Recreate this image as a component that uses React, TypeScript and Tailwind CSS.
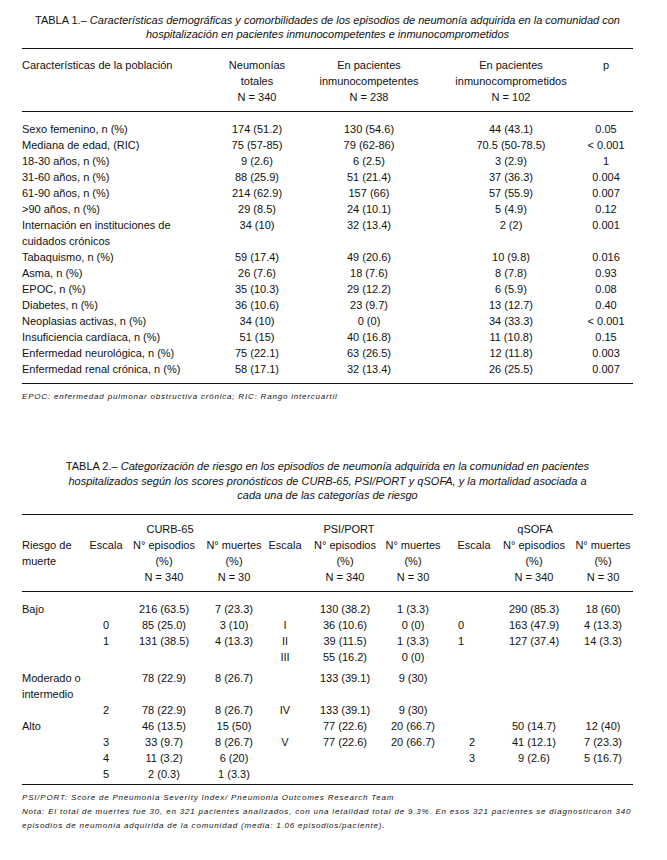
import React from "react";

type Row = string[];

const t1Header: Row[] = [
  ["Características de la población", "Neumonías", "En pacientes", "En pacientes", "p"],
  ["", "totales", "inmunocompetentes", "inmunocomprometidos", ""],
  ["", "N = 340", "N = 238", "N = 102", ""],
];

const t1Rows: Row[] = [
  ["Sexo femenino, n (%)", "174 (51.2)", "130 (54.6)", "44 (43.1)", "0.05"],
  ["Mediana de edad, (RIC)", "75 (57-85)", "79 (62-86)", "70.5 (50-78.5)", "< 0.001"],
  ["18-30 años, n (%)", "9 (2.6)", "6 (2.5)", "3 (2.9)", "1"],
  ["31-60 años, n (%)", "88 (25.9)", "51 (21.4)", "37 (36.3)", "0.004"],
  ["61-90 años, n (%)", "214 (62.9)", "157 (66)", "57 (55.9)", "0.007"],
  [">90 años, n (%)", "29 (8.5)", "24 (10.1)", "5 (4.9)", "0.12"],
  ["Internación en instituciones de", "34 (10)", "32 (13.4)", "2 (2)", "0.001"],
  ["cuidados crónicos", "", "", "", ""],
  ["Tabaquismo, n (%)", "59 (17.4)", "49 (20.6)", "10 (9.8)", "0.016"],
  ["Asma, n (%)", "26 (7.6)", "18 (7.6)", "8 (7.8)", "0.93"],
  ["EPOC, n (%)", "35 (10.3)", "29 (12.2)", "6 (5.9)", "0.08"],
  ["Diabetes, n (%)", "36 (10.6)", "23 (9.7)", "13 (12.7)", "0.40"],
  ["Neoplasias activas, n (%)", "34 (10)", "0 (0)", "34 (33.3)", "< 0.001"],
  ["Insuficiencia cardíaca, n (%)", "51 (15)", "40 (16.8)", "11 (10.8)", "0.15"],
  ["Enfermedad neurológica, n (%)", "75 (22.1)", "63 (26.5)", "12 (11.8)", "0.003"],
  ["Enfermedad renal crónica, n (%)", "58 (17.1)", "32 (13.4)", "26 (25.5)", "0.007"],
];

// riesgo, esc, epi, muertes (CURB-65) | esc, epi, muertes (PSI) | esc, epi, muertes (qSOFA)
const t2Rows: Row[] = [
  ["Bajo", "", "216 (63.5)", "7 (23.3)", "", "130 (38.2)", "1 (3.3)", "", "290 (85.3)", "18 (60)"],
  ["", "0", "85 (25.0)", "3 (10)", "I", "36 (10.6)", "0 (0)", "0", "163 (47.9)", "4 (13.3)"],
  ["", "1", "131 (38.5)", "4 (13.3)", "II", "39 (11.5)", "1 (3.3)", "1", "127 (37.4)", "14 (3.3)"],
  ["", "", "", "", "III", "55 (16.2)", "0 (0)", "", "", ""],
  ["Moderado o", "", "78 (22.9)", "8 (26.7)", "", "133 (39.1)", "9 (30)", "", "", ""],
  ["intermedio", "", "", "", "", "", "", "", "", ""],
  ["", "2", "78 (22.9)", "8 (26.7)", "IV", "133 (39.1)", "9 (30)", "", "", ""],
  ["Alto", "", "46 (13.5)", "15 (50)", "", "77 (22.6)", "20 (66.7)", "", "50 (14.7)", "12 (40)"],
  ["", "3", "33 (9.7)", "8 (26.7)", "V", "77 (22.6)", "20 (66.7)", "2", "41 (12.1)", "7 (23.3)"],
  ["", "4", "11 (3.2)", "6 (20)", "", "", "", "3", "9 (2.6)", "5 (16.7)"],
  ["", "5", "2 (0.3)", "1 (3.3)", "", "", "", "", "", ""],
];

const t1Cols = "grid grid-cols-[178px_114px_110px_174px_16px]";
const t2Cols = "grid grid-cols-[62px_44px_72px_68px_34px_86px_50px_72px_48px_90px]";

function Rule() {
  return <div className="h-px w-[611px] bg-[#111]" />;
}

function T1Row({ row }: { row: Row }) {
  return (
    <div className={t1Cols}>
      <div className="whitespace-nowrap">{row[0]}</div>
      {row.slice(1).map((c, i) => (
        <div key={i} className="flex justify-center whitespace-nowrap">
          {c}
        </div>
      ))}
    </div>
  );
}

function T2Row({ row, className = "" }: { row: Row; className?: string }) {
  return (
    <div className={`${t2Cols} ${className}`}>
      <div className="whitespace-nowrap">{row[0]}</div>
      {row.slice(1).map((c, i) => {
        let extra = "";
        // qSOFA escala: 0 y 1 quedan más a la izquierda
        if (i === 6) extra = c === "0" || c === "1" ? "pr-[26px]" : "pr-[4px]";
        return (
          <div key={i} className={`flex justify-center whitespace-nowrap ${extra}`}>
            {c}
          </div>
        );
      })}
    </div>
  );
}

export default function App() {
  return (
    <div className="min-h-screen w-[667px] bg-white px-[22px] text-[11px] leading-4 text-[#111] font-['Liberation_Sans',Arial,Helvetica,sans-serif]">
      {/* TABLA 1 */}
      <div className="w-[611px] pt-[13px] text-center text-[11px] leading-[14px] whitespace-nowrap">
        TABLA 1.– <i>Características demográficas y comorbilidades de los episodios de neumonía adquirida en la comunidad con</i>
        <br />
        <i>hospitalización en pacientes inmunocompetentes e inmunocomprometidos</i>
      </div>
      <div className="mt-[7px]">
        <Rule />
      </div>
      <div className="pt-[8px] pb-[6px]">
        {t1Header.map((r, i) => (
          <T1Row key={i} row={r} />
        ))}
      </div>
      <Rule />
      <div className="pt-[9px] pb-[6px]">
        {t1Rows.map((r, i) => (
          <T1Row key={i} row={r} />
        ))}
      </div>
      <Rule />
      <p className="mt-[6px] text-[8px] leading-[13px] italic tracking-[0.8px] whitespace-nowrap">
        EPOC: enfermedad pulmonar obstructiva crónica; RIC: Rango intercuartil
      </p>

      {/* TABLA 2 */}
      <div className="mt-[56px] w-[611px] text-center text-[11px] leading-[14.5px] whitespace-nowrap">
        TABLA 2.– <i>Categorización de riesgo en los episodios de neumonía adquirida en la comunidad en pacientes</i>
        <br />
        <i>hospitalizados según los scores pronósticos de CURB-65, PSI/PORT y qSOFA, y la mortalidad asociada a</i>
        <br />
        <i>cada una de las categorías de riesgo</i>
      </div>
      <div className="mt-[11px]">
        <Rule />
      </div>
      <div className="pt-[6px] pb-[6px]">
        <div className={t2Cols}>
          <div />
          <div />
          <div className="flex justify-center whitespace-nowrap pl-[12px]">CURB-65</div>
          <div />
          <div />
          <div className="flex justify-center whitespace-nowrap pl-[8px]">PSI/PORT</div>
          <div />
          <div />
          <div className="flex justify-center whitespace-nowrap pl-[2px]">qSOFA</div>
          <div />
        </div>
        <div className={t2Cols}>
          <div className="whitespace-nowrap">Riesgo de</div>
          <div className="flex justify-center">Escala</div>
          <div className="flex justify-center whitespace-nowrap">N° episodios</div>
          <div className="flex justify-center whitespace-nowrap">N° muertes</div>
          <div className="flex justify-center">Escala</div>
          <div className="flex justify-center whitespace-nowrap">N° episodios</div>
          <div className="flex justify-center whitespace-nowrap">N° muertes</div>
          <div className="flex justify-center">Escala</div>
          <div className="flex justify-center whitespace-nowrap">N° episodios</div>
          <div className="flex justify-center whitespace-nowrap">N° muertes</div>
        </div>
        <T2Row row={["muerte", "", "(%)", "(%)", "", "(%)", "(%)", "", "(%)", "(%)"]} />
        <T2Row row={["", "", "N = 340", "N = 30", "", "N = 340", "N = 30", "", "N = 340", "N = 30"]} />
      </div>
      <Rule />
      <div className="pt-[9px] pb-[2px]">
        {t2Rows.map((r, i) => (
          <T2Row key={i} row={r} className={i === 4 ? "mt-[5px]" : ""} />
        ))}
      </div>
      <Rule />
      <div className="mt-[6px] text-[8px] leading-[14px] italic tracking-[0.8px] whitespace-nowrap">
        <p>PSI/PORT: Score de Pneumonia Severity Index/ Pneumonia Outcomes Research Team</p>
        <p>
          Nota: El total de muertes fue 30, en 321 pacientes analizados, con una letalidad total de 9.3%. En esos 321 pacientes se diagnosticaron 340
          <br />
          episodios de neumonia adquirida de la comunidad (media: 1.06 episodios/paciente).
        </p>
      </div>
    </div>
  );
}
